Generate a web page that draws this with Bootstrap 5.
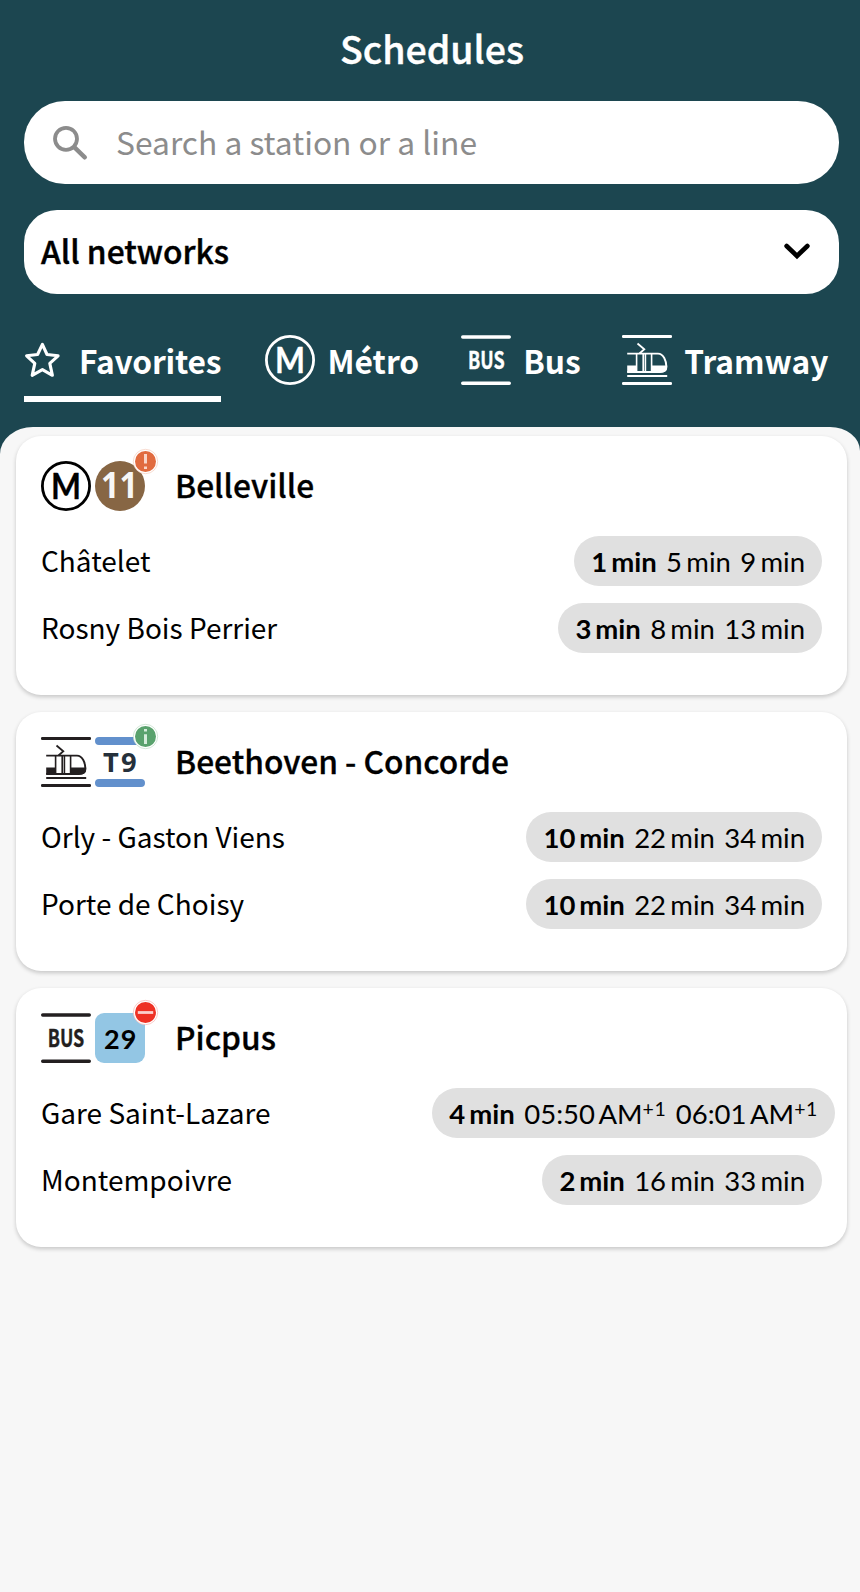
<!DOCTYPE html>
<html lang="en">
<head>
<meta charset="utf-8">
<meta name="viewport" content="width=device-width, initial-scale=1">
<title>Schedules</title>
<link href="https://cdn.jsdelivr.net/npm/bootstrap@5.3.0/dist/css/bootstrap.min.css" rel="stylesheet">
<style>
:root{--teal:#1c4650;--sans:"Noto Sans CJK JP","Noto Sans",sans-serif;--num:Lato,sans-serif}
body{font-family:var(--sans);background:#f7f7f7;color:#000;min-height:1592px;overflow-x:hidden}
.top-bar{background:var(--teal);height:457px;color:#fff;padding:0 21px 0 24px}
.page-title{font-size:37.5px;font-weight:500;line-height:96px;height:101px;margin:0;padding-left:1px;-webkit-text-stroke:.4px}
.search-box{height:83px;border-radius:41px;background:#fff;color:#8c8c8c;font-size:31.75px;padding-left:28px;margin-bottom:26px}
.search-box span{padding:0 0 1px 28px}
.network-select{height:83.5px;border-radius:33px;background:#fff;color:#000;font-size:31.75px;font-weight:500;padding:0 28px 0 17px;-webkit-text-stroke:.4px}
.network-select span{padding-bottom:2px}
.network-select svg{margin-bottom:1px}
.mode-tabs{height:109px;padding-top:41.5px;gap:41.5px;font-size:31.7px;font-weight:700;flex-wrap:nowrap}
.mode-tab{height:67px;line-height:50px;white-space:nowrap;color:#fff;text-decoration:none;border-bottom:6px solid transparent}
.mode-tab.active{border-color:#fff;letter-spacing:-.2px;width:196.5px;margin-right:2.5px}
.mode-tab svg{flex:none;display:block}
.board{background:#f7f7f7;border-radius:33px 30px 0 0/27px 24px 0 0;margin-top:-30px;padding:9px 13px 0 16px;position:relative}
.stop-card{height:259.4px;border:0;border-radius:25px;background:#fff;padding:25px 25px 0;margin-bottom:16.4px;box-shadow:0 2px 4px rgba(0,0,0,.2)}
.stop-head{height:50px;font-size:31.7px;font-weight:500;-webkit-text-stroke:.3px}
.stop-head svg{display:block;overflow:visible}
.stop-head h2{font-size:inherit;font-weight:inherit;line-height:47px;margin:0 0 0 30px}
.line-mark{position:relative;margin-left:4px}
.alert-dot{position:absolute;right:-12.5px;top:-12.5px}
.direction{height:50px;font-size:28px;line-height:49.5px;margin-top:17px}
.stop-head + .direction{margin-top:25px}
.times{font-family:var(--num);font-size:27.5px;height:50px;border-radius:25px;background:#e0e0e0;padding:1px 17px 0;gap:9.4px;word-spacing:-2.8px;color:#000;white-space:nowrap}
.times.wide{margin-right:-13px;word-spacing:-2.6px}
.plus-day{font-size:19.5px;letter-spacing:.6px;position:relative;top:-8px}
svg text{-webkit-text-stroke:0}
</style>
</head>
<body>
<svg width="0" height="0" class="position-absolute">
  <symbol id="tram" viewBox="0 0 50 50">
    <path d="M1.2 1.5H48.8M1.2 48.5H48.8" stroke="currentColor" stroke-width="2.8" stroke-linecap="round"/>
    <path d="M5.2 40.9H45.2" stroke="currentColor" stroke-width="2"/>
    <path d="M15.5 8.5L22.3 14.3L17.5 18.5" fill="none" stroke="currentColor" stroke-width="1.8"/>
    <path d="M5.2 18.6H36C41.5 18.6 44.4 26 44.4 32C44.4 35.5 42 37 38 37H5.2" fill="none" stroke="currentColor" stroke-width="1.9"/>
    <path d="M5.2 30.5H14V37.5H5.2zM30 30.5H45.2C45.2 35.5 42.5 37.6 38.5 37.6H30z" fill="currentColor"/>
    <path d="M14.6 18.6V37M21.2 18.6V37M23.4 18.6V37M29.6 18.6V37" stroke="currentColor" stroke-width="1.6"/>
  </symbol>
</svg>

<header class="top-bar">
  <h1 class="page-title text-center">Schedules</h1>
  <div class="search-box d-flex align-items-center">
    <svg width="36" height="36" viewBox="0 0 36 36" fill="none" stroke="#8c8c8c"><circle cx="14" cy="13.8" r="11" stroke-width="3.8"/><path d="M22.5 22.3L32.8 32.3" stroke-width="4.4" stroke-linecap="round"/></svg>
    <span>Search a station or a line</span>
  </div>
  <div class="network-select d-flex align-items-center justify-content-between">
    <span>All networks</span>
    <svg width="28" height="18" viewBox="0 0 28 18" fill="none" stroke="#000" stroke-width="4.6" stroke-linecap="round"><path d="M3.6 4L14 14L24.4 4"/></svg>
  </div>
  <nav class="mode-tabs nav">
    <a class="mode-tab active d-flex">
      <svg width="55" height="50" viewBox="0 0 55 50" fill="none" stroke="#fff" stroke-width="3.1" stroke-linejoin="round"><path d="M18.4 9.3L23 19.5L34.1 20.8L25.8 28.3L28.4 40.3L18.4 34.6L8.2 40.3L10.8 28.3L2.6 20.8L13.6 19.5z"/></svg>
      <span>Favorites</span>
    </a>
    <a class="mode-tab d-flex">
      <svg width="63" height="50" viewBox="0 0 63 50"><circle cx="25" cy="25" r="23.6" fill="none" stroke="#fff" stroke-width="2.8"/><text x="25" y="37.6" text-anchor="middle" textLength="30" lengthAdjust="spacingAndGlyphs" font-family="Lato" font-weight="700" font-size="36" fill="#fff" stroke="#fff" stroke-width=".3" stroke-linejoin="round">M</text></svg>
      <span>Métro</span>
    </a>
    <a class="mode-tab d-flex">
      <svg width="62.5" height="50" viewBox="0 0 62.5 50"><path d="M1.7 2H48.3M1.7 48.3H48.3" stroke="#fff" stroke-width="3.4" stroke-linecap="round"/><text x="7" y="33.8" textLength="36.6" lengthAdjust="spacingAndGlyphs" font-family="Noto Sans CJK JP" font-weight="700" font-size="24" fill="#fff" stroke="#fff" stroke-width=".4">BUS</text></svg>
      <span>Bus</span>
    </a>
    <a class="mode-tab d-flex">
      <svg width="62" height="50" viewBox="0 0 62 50"><use href="#tram" width="50" height="50"/></svg>
      <span>Tramway</span>
    </a>
  </nav>
</header>

<main class="board">
  <section class="card stop-card">
    <div class="stop-head d-flex">
      <svg width="50" height="50" viewBox="0 0 50 50"><circle cx="25" cy="25" r="23.6" fill="#fff" stroke="#000" stroke-width="2.8"/><text x="25" y="37.6" text-anchor="middle" textLength="30" lengthAdjust="spacingAndGlyphs" font-family="Lato" font-weight="700" font-size="36" stroke="#000" stroke-width=".3" stroke-linejoin="round">M</text></svg>
      <div class="line-mark">
        <svg width="50" height="50" viewBox="0 0 50 50"><circle cx="25" cy="25" r="25" fill="#876644"/><text x="6" y="37.4" textLength="37" lengthAdjust="spacingAndGlyphs" font-family="Noto Sans" font-weight="700" font-size="35" fill="#f7f7f7">11</text></svg>
        <svg class="alert-dot" width="25" height="25" viewBox="0 0 25 25"><circle cx="12.5" cy="12.5" r="12.2" fill="#fff" stroke="#f3c4b2" stroke-width=".6"/><circle cx="12.5" cy="12.5" r="10.5" fill="#e16b3f"/><path d="M12.5 5V14.5M12.5 17.5V20" stroke="#f9d5c8" stroke-width="3"/></svg>
      </div>
      <h2>Belleville</h2>
    </div>
    <div class="direction d-flex justify-content-between"><span>Châtelet</span><div class="times d-flex"><b>1 min</b><span>5 min</span><span>9 min</span></div></div>
    <div class="direction d-flex justify-content-between"><span>Rosny Bois Perrier</span><div class="times d-flex"><b>3 min</b><span>8 min</span><span>13 min</span></div></div>
  </section>

  <section class="card stop-card">
    <div class="stop-head d-flex">
      <svg width="50" height="50" color="#231f20"><use href="#tram"/></svg>
      <div class="line-mark">
        <svg width="50" height="50" viewBox="0 0 50 50"><path d="M4 4H46M4 46H46" stroke="#6290cc" stroke-width="8" stroke-linecap="round"/><text x="8" y="34.8" letter-spacing="2.2" font-family="Noto Sans" font-weight="700" font-size="27.3" fill="#25303b">T9</text></svg>
        <svg class="alert-dot" width="25" height="25" viewBox="0 0 25 25"><circle cx="12.5" cy="12.5" r="12.2" fill="#fff" stroke="#b5d6be" stroke-width=".6"/><circle cx="12.5" cy="12.5" r="10.5" fill="#59a26d"/><path d="M12.5 5V7.6M12.5 10.2V20" stroke="#d5ecdb" stroke-width="3"/></svg>
      </div>
      <h2>Beethoven - Concorde</h2>
    </div>
    <div class="direction d-flex justify-content-between"><span>Orly - Gaston Viens</span><div class="times d-flex"><b>10 min</b><span>22 min</span><span>34 min</span></div></div>
    <div class="direction d-flex justify-content-between"><span>Porte de Choisy</span><div class="times d-flex"><b>10 min</b><span>22 min</span><span>34 min</span></div></div>
  </section>

  <section class="card stop-card">
    <div class="stop-head d-flex">
      <svg width="50" height="50" viewBox="0 0 50 50"><path d="M1.7 2H48.3M1.7 48.3H48.3" stroke="#231f20" stroke-width="3.4" stroke-linecap="round"/><text x="6.7" y="33.8" textLength="36.6" lengthAdjust="spacingAndGlyphs" font-family="Noto Sans CJK JP" font-weight="700" font-size="24" fill="#231f20" stroke="#231f20" stroke-width=".4">BUS</text></svg>
      <div class="line-mark">
        <svg width="50" height="50" viewBox="0 0 50 50"><rect width="50" height="50" rx="9" fill="#93c6e4"/><text x="9" y="36.2" font-family="Lato" font-weight="700" font-size="27" letter-spacing="1.2">29</text></svg>
        <svg class="alert-dot" width="25" height="25" viewBox="0 0 25 25"><circle cx="12.5" cy="12.5" r="12.2" fill="#fff" stroke="#f5a9a4" stroke-width=".6"/><circle cx="12.5" cy="12.5" r="10.5" fill="#ee3124"/><path d="M4.8 12.5H20.2" stroke="#fbd0cd" stroke-width="2.8"/></svg>
      </div>
      <h2>Picpus</h2>
    </div>
    <div class="direction d-flex justify-content-between"><span>Gare Saint-Lazare</span><div class="times wide d-flex"><b>4 min</b><span>05:50 AM<span class="plus-day">+1</span></span><span>06:01 AM<span class="plus-day">+1</span></span></div></div>
    <div class="direction d-flex justify-content-between"><span>Montempoivre</span><div class="times d-flex"><b>2 min</b><span>16 min</span><span>33 min</span></div></div>
  </section>
</main>
<script src="https://cdn.jsdelivr.net/npm/bootstrap@5.3.0/dist/js/bootstrap.bundle.min.js"></script>
</body>
</html>
